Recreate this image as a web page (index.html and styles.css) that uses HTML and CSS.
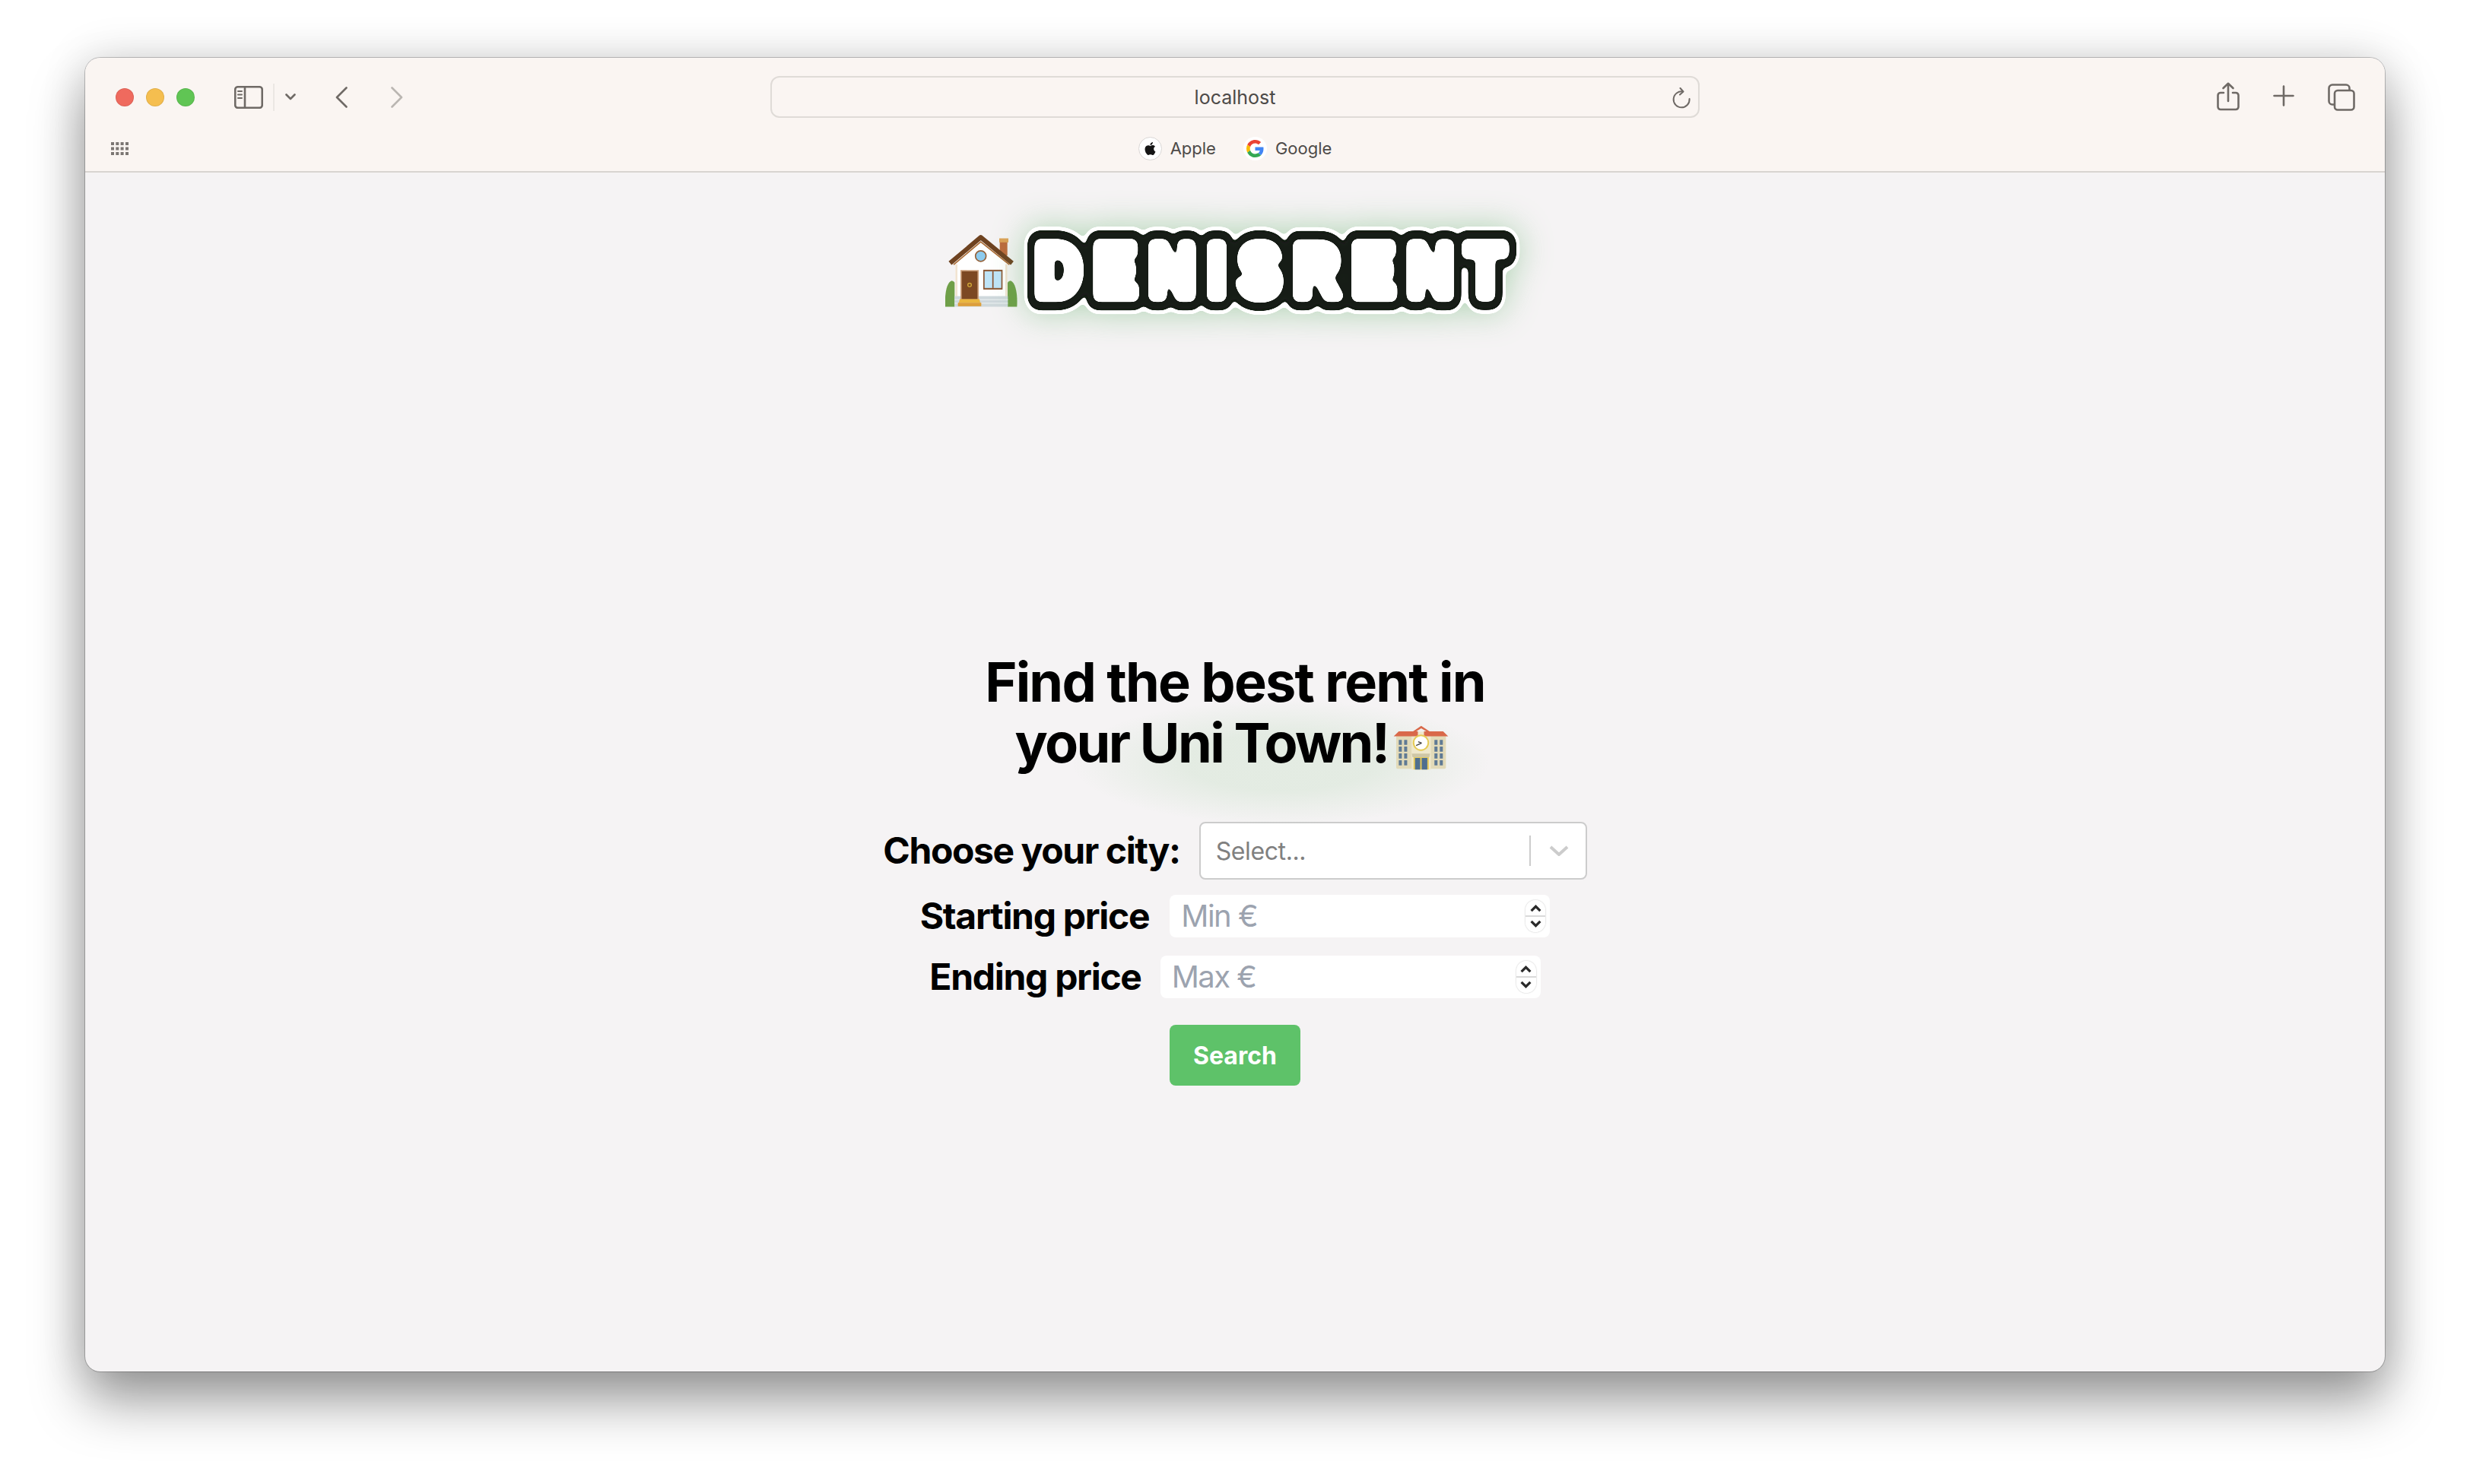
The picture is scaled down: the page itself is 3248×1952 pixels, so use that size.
FILE: index.html
```html
<!DOCTYPE html>
<html lang="en">
<head>
<meta charset="utf-8">
<title>DenisRent</title>
<link rel="stylesheet" href="styles.css">
</head>
<body>
<div class="window">
  <header class="toolbar">
    <div class="row-top">
      <div class="tools-left">
        <span class="light red"></span><span class="light yellow"></span><span class="light green"></span>
        <svg class="ic-sidebar" viewBox="0 0 38 30"><rect x="1.25" y="1.25" width="35.5" height="27.5" rx="3.5"/><path d="M14 1.5v27"/><path class="thin" d="M5 7h5M5 11.5h5M5 16h5"/></svg>
        <span class="sep"></span>
        <svg class="ic-chev" viewBox="0 0 14 9"><path d="M1.5 1.5 7 7l5.5-5.5"/></svg>
        <svg class="ic-back" viewBox="0 0 16 28"><path d="M14.5 1.5 2 14l12.5 12.5"/></svg>
        <svg class="ic-fwd" viewBox="0 0 16 28"><path d="M1.5 1.5 14 14 1.5 26.5"/></svg>
      </div>
      <div class="address">
        <span class="address-text">localhost</span>
        <svg class="ic-reload" viewBox="0 0 24 28"><path d="M14 5.5A10.5 10.5 0 1 0 22.6 15"/><path d="M10.5 1 14.5 5.5 10 9.5"/></svg>
      </div>
      <div class="tools-right">
        <svg class="ic-share" viewBox="0 0 30 38"><path d="M9 14H5a3.5 3.5 0 0 0-3.5 3.5v15A3.5 3.5 0 0 0 5 36h20a3.5 3.5 0 0 0 3.5-3.5v-15A3.5 3.5 0 0 0 25 14h-4"/><path d="M15 25V2M8.500 8 15 1.800 21.500 8"/></svg>
        <svg class="ic-plus" viewBox="0 0 28 28"><path d="M14 1.500v25M1.500 14h25"/></svg>
        <svg class="ic-tabs" viewBox="0 0 36 36"><path d="M8 27.500H6A4.500 4.500 0 0 1 1.500 23V6A4.500 4.500 0 0 1 6 1.500h18A4.500 4.500 0 0 1 28.500 6v2"/><rect x="9" y="9" width="25.500" height="25.500" rx="4"/></svg>
      </div>
    </div>
    <div class="row-bottom">
      <svg class="ic-grid" viewBox="0 0 23 17"><path d="M0 0h4v4H0zM6.300 0h4v4h-4zM12.600 0h4v4h-4zM19 0h4v4h-4zM0 6.500h4v4H0zM6.300 6.500h4v4h-4zM12.600 6.500h4v4h-4zM19 6.500h4v4h-4zM0 13h4v4H0zM6.300 13h4v4h-4zM12.600 13h4v4h-4zM19 13h4v4h-4z"/></svg>
      <nav class="favs">
        <a class="fav"><span class="fav-icon apple"><svg viewBox="0 0 24 24"><path d="M12.152 6.896c-.948 0-2.415-1.078-3.96-1.04-2.04.027-3.91 1.183-4.961 3.014-2.117 3.675-.546 9.103 1.519 12.09 1.013 1.454 2.208 3.09 3.792 3.039 1.52-.065 2.09-.987 3.935-.987 1.831 0 2.35.987 3.96.948 1.637-.026 2.676-1.48 3.676-2.948 1.156-1.688 1.636-3.325 1.662-3.415-.039-.013-3.182-1.221-3.22-4.857-.026-3.04 2.48-4.494 2.597-4.559-1.429-2.09-3.623-2.324-4.39-2.376-2-.156-3.675 1.09-4.61 1.09zM15.530 3.830c.843-1.012 1.4-2.427 1.245-3.830-1.207.052-2.662.805-3.532 1.818-.78.896-1.454 2.338-1.273 3.714 1.338.104 2.715-.688 3.559-1.701"/></svg></span>Apple</a>
        <a class="fav"><span class="fav-icon google"><svg viewBox="0 0 48 48"><path fill="#EA4335" d="M24 9.500c3.540 0 6.710 1.220 9.210 3.600l6.850-6.850C35.900 2.380 30.470 0 24 0 14.620 0 6.510 5.380 2.560 13.220l7.980 6.190C12.430 13.720 17.740 9.500 24 9.500z"/><path fill="#4285F4" d="M46.980 24.550c0-1.570-.15-3.090-.38-4.550H24v9.020h12.940c-.58 2.960-2.260 5.480-4.780 7.180l7.730 6c4.510-4.180 7.090-10.360 7.090-17.650z"/><path fill="#FBBC05" d="M10.530 28.590c-.48-1.450-.76-2.990-.76-4.590s.27-3.140.76-4.590l-7.980-6.190C.92 16.460 0 20.120 0 24c0 3.880.92 7.540 2.560 10.780l7.970-6.190z"/><path fill="#34A853" d="M24 48c6.480 0 11.930-2.130 15.890-5.810l-7.730-6c-2.150 1.450-4.920 2.300-8.160 2.300-6.260 0-11.570-4.220-13.470-9.910l-7.980 6.190C6.510 42.620 14.620 48 24 48z"/></svg></span>Google</a>
      </nav>
      <span class="spacer"></span>
    </div>
  </header>
  <main class="content">
    <div class="logo">
      <svg class="house" viewBox="25 32 285 290">
        <path d="M25 318c-3-50 5-95 25-103 8 0 12 8 12 8v95z" fill="#6f9f48"/>
        <path d="M308 318c3-50-5-95-25-103-8 0-12 8-12 8v95z" fill="#6f9f48"/>
        <path d="M240 56h30v60h-30z" fill="#bd6a3c"/><path d="M238 48h36v16h-36z" fill="#dda257"/>
        <path d="M65 150 165 62l105 88v128H65z" fill="#fff"/>
        <path d="M65 150v128h8V150zM262 150v128h8V150z" fill="#f2e4d2"/>
        <path d="M62 276h210v42H62z" fill="#cfd8dc"/><path d="M62 290h210M62 304h210" stroke="#eef2f3" stroke-width="3"/>
        <path d="M44 146 165 44l124 102" fill="none" stroke="#6e4220" stroke-width="18" stroke-linejoin="round"/>
        <path d="M58 152 165 62l113 90" fill="none" stroke="#a96a33" stroke-width="5"/>
        <circle cx="165" cy="118" r="21" fill="#8dcbee" stroke="#95623a" stroke-width="5"/>
        <path d="M85 173h72v118H85z" fill="#cda17e"/><path d="M90 178h62v110H90z" fill="#7c4823"/>
        <circle cx="121" cy="232" r="7" fill="none" stroke="#d0a838" stroke-width="4"/>
        <path d="M82 288h78l3 14H79z" fill="#eab63f"/><path d="M75 302h92v14H75z" fill="#dd9e3a"/>
        <path d="M175 172h76v78h-76z" fill="#8a5430"/><path d="M180 178h66v66h-66z" fill="#bfe4f8"/>
        <path d="M213 178v66" stroke="#8a5430" stroke-width="5"/>
      </svg>
      <svg class="wordmark" viewBox="0 0 660 120">
        <defs>
          <filter id="goo" x="-5%" y="-20%" width="110%" height="140%">
            <feGaussianBlur stdDeviation="3"/>
            <feColorMatrix values="1 0 0 0 0  0 1 0 0 0  0 0 1 0 0  0 0 0 14 -6"/>
          </filter>
        </defs>
        <use href="#logo-word" class="w-outer"/>
        <use href="#logo-word" class="w-black"/>
        <g class="w-top"><text id="logo-word" x="22" y="94.500" textLength="717" lengthAdjust="spacing" transform="scale(.86 1)">DENISRENT</text></g>
      </svg>
    </div>
    <h1 class="title">Find the best rent in<br><span class="title-second">your Uni Town!</span><svg class="school" viewBox="38 25 218 175">
        <path d="M50 66h195v124q0 5-5 5H55q-5 0-5-5z" fill="#e2dab8"/>
        <path d="M110 50h76v148h-76z" fill="#efe8cc"/>
        <path d="M40 68 60 48h75v20zM254 68l-20-20h-75v20z" fill="#d9694a"/>
        <path d="M105 56 148 27l44 29-3 4-41-24-39 24z" fill="#d9694a"/>
        <g fill="#5f7a94"><path d="M60 82h12v19H60zM81 82h12v19H81zM60 108h12v20H60zM81 108h12v20H81zM60 135h12v20H60zM81 135h12v20H81zM60 162h12v20H60zM81 162h12v20H81z"/><path d="M200 82h12v19h-12zM221 82h12v19h-12zM200 108h12v20h-12zM221 108h12v20h-12zM200 135h12v20h-12zM221 135h12v20h-12zM200 162h12v20h-12zM221 162h12v20h-12z"/></g>
        <circle cx="147" cy="93" r="29" fill="#fff" stroke="#e6cb55" stroke-width="6"/>
        <path d="M128 104l22-10M150 94l-14-5" stroke="#444" stroke-width="4" fill="none"/>
        <path d="M111 136h72l-3 14h-66z" fill="#cfc7a6"/>
        <path d="M118 150h60v48h-60z" fill="#e5c95b"/><path d="M124 153h20v45h-20zM150 153h22v45h-22z" fill="#4f6f8f"/>
      </svg></h1>
    <form class="form">
      <div class="row row-city">
        <label class="label label-city">Choose your city:</label>
        <div class="select">
          <span class="select-ph">Select...</span>
          <span class="select-sep"></span>
          <svg class="select-chev" viewBox="0 0 26 14"><path d="M2 2l11 10L24 2"/></svg>
        </div>
      </div>
      <div class="row row-start">
        <label class="label">Starting price</label>
        <div class="num"><input class="num-input" type="text" placeholder="Min €">
          <span class="stepper"><svg viewBox="0 0 14 9"><path d="M1.500 7.500 7 2l5.500 5.500"/></svg><svg viewBox="0 0 14 9"><path d="M1.500 1.500 7 7l5.500-5.500"/></svg></span></div>
      </div>
      <div class="row row-end">
        <label class="label">Ending price</label>
        <div class="num"><input class="num-input" type="text" placeholder="Max €">
          <span class="stepper"><svg viewBox="0 0 14 9"><path d="M1.500 7.500 7 2l5.500 5.500"/></svg><svg viewBox="0 0 14 9"><path d="M1.500 1.500 7 7l5.500-5.500"/></svg></span></div>
      </div>
      <button class="search" type="button">Search</button>
    </form>
  </main>
</div>
</body>
</html>
```
FILE: styles.css
```css
* { box-sizing: border-box; }
html, body { margin: 0; height: 100%; background: #fff; overflow: hidden; }
body { padding: 76px 112px 148px; font-family: Inter, "Liberation Sans", sans-serif; color: #000; }
svg { display: block; flex: none; }

.window {
  height: 1728px;
  border-radius: 20px;
  overflow: hidden;
  display: flex;
  flex-direction: column;
  background: #f5f3f4;
}
body::before {
  content: "";
  position: absolute;
  left: 112px; top: 76px; width: 3024px; height: 1728px;
  border-radius: 20px;
  box-shadow: 0 0 0 1px rgba(0,0,0,.22), 0 40px 70px rgba(0,0,0,.38), 0 0 60px rgba(0,0,0,.14);
}

.toolbar {
  position: relative;
  height: 151px;
  flex: none;
  background: #faf5f2;
  border-bottom: 2px solid #d8d4d1;
  padding-top: 24px;
}
.row-top {
  display: grid;
  grid-template-columns: 1fr 1222px 1fr;
  height: 55px;
  align-items: center;
}
.tools-left { display: flex; align-items: center; padding-left: 40px; }
.light { width: 24px; height: 24px; border-radius: 50%; margin-right: 16px; border: 1px solid rgba(0,0,0,.08); }
.red { background: #ef6a5e; }
.yellow { background: #f5be4f; }
.green { background: #60c554; }
.tools-left svg, .tools-right svg, .ic-reload { fill: none; stroke: #6f6a66; stroke-width: 2.6; stroke-linecap: round; stroke-linejoin: round; }
.ic-sidebar { width: 38px; height: 30px; margin-left: 36px; }
.ic-sidebar .thin { stroke-width: 2; }
.sep { width: 2px; height: 36px; background: #ebe7e3; margin-left: 13px; }
.ic-chev { width: 14px; height: 9px; margin-left: 14px; }
.ic-back { width: 16px; height: 28px; margin-left: 52px; }
.ic-fwd { width: 16px; height: 28px; margin-left: 57px; stroke: #bab6b2 !important; }

.address {
  position: relative;
  height: 55px;
  border: 2px solid #dfdbd7;
  border-radius: 12px;
  display: flex;
  align-items: center;
  justify-content: center;
}
.address-text { font-size: 25px; color: #4d4a48; }
.ic-reload { position: absolute; right: 10px; top: 13px; width: 24px; height: 28px; stroke-width: 2; }

.tools-right { display: flex; align-items: center; justify-content: flex-end; padding-right: 39px; }
.ic-share { width: 30px; height: 38px; margin-top: -1px; }
.ic-plus { width: 28px; height: 28px; margin-left: 44px; margin-top: -4px; }
.ic-tabs { width: 36px; height: 36px; margin-left: 44px; }

.row-bottom {
  display: grid;
  grid-template-columns: 1fr auto 1fr;
  align-items: center;
  height: 32px;
  margin-top: 24px;
}
.ic-grid { width: 23px; height: 17px; margin-left: 34px; fill: #7b7673; }
.favs { display: flex; gap: 36px; }
.fav { display: flex; align-items: center; gap: 11px; font-size: 22px; color: #4d4a48; }
.fav-icon { width: 31px; height: 31px; border-radius: 50%; background: #fff; display: flex; align-items: center; justify-content: center; }
.fav-icon.apple { border: 1px solid #d9d6d4; }
.apple svg { width: 17px; height: 19px; fill: #151515; }
.google svg { width: 23px; height: 23px; }

.content {
  flex: 1;
  display: flex;
  flex-direction: column;
  align-items: center;
  padding-top: 68px;
}
.logo { display: flex; align-items: center; height: 120px; margin-left: -2px; }
.house { width: 95px; height: 97px; margin-right: 5px; margin-top: 2px; }
.wordmark { width: 660px; height: 120px; overflow: visible; filter: drop-shadow(0 0 22px rgba(80,170,90,.42)); }
.wordmark text { font-family: "Liberation Sans", sans-serif; font-weight: 700; font-size: 96px; }
.w-outer { fill: #fff; stroke: #fff; stroke-width: 48px; stroke-linejoin: round; filter: url(#goo); }
.w-black { fill: #181b17; stroke: #181b17; stroke-width: 38px; stroke-linejoin: round; filter: url(#goo); }
.w-top { fill: #fff; stroke: #fff; stroke-width: 16px; stroke-linejoin: round; filter: url(#goo); }

.title {
  position: relative;
  z-index: 0;
  margin: 442px 0 0;
  font-size: 72px;
  line-height: 80px;
  font-weight: 700;
  text-align: center;
  letter-spacing: -1.8px;
}
.title-second { letter-spacing: -2.6px; }
.title::before {
  content: "";
  position: absolute;
  z-index: -1;
  left: 114px;
  top: 63px;
  width: 550px;
  height: 165px;
  background: radial-gradient(closest-side, rgba(110,185,110,.13) 45%, rgba(110,185,110,0));
}
.school { display: inline-block; width: 73px; height: 59px; margin: 0 9px 0 6px; vertical-align: -10px; }

.form { display: flex; flex-direction: column; align-items: center; gap: 20px; margin-top: 64px; }
.row { display: flex; align-items: center; gap: 27px; }
.row-city { gap: 25px; }
.row-end { margin-top: 4px; gap: 25px; }
.label { font-size: 48px; font-weight: 700; line-height: 56px; letter-spacing: -1.3px; }
.label-city { letter-spacing: -1.4px; }
.select {
  width: 510px;
  height: 76px;
  background: #fff;
  border: 2px solid #ccc;
  border-radius: 8px;
  display: flex;
  align-items: center;
  padding: 0 22px 0 20px;
}
.select-ph { flex: 1; font-size: 32px; color: #808080; letter-spacing: -.4px; }
.select-sep { width: 2px; height: 40px; background: #ccc; margin-right: 24px; }
.select-chev { width: 26px; height: 14px; fill: none; stroke: #ccc; stroke-width: 4; }

.num { position: relative; width: 500px; height: 56px; background: #fff; border-radius: 8px; }
.num-input {
  width: 100%;
  height: 56px;
  border: 0;
  outline: 0;
  background: transparent;
  padding: 0 15px;
  font: 400 40px/56px Inter, "Liberation Sans", sans-serif;
  letter-spacing: -1.5px;
  color: #111;
}
.num-input::placeholder { color: #9ca3af; opacity: 1; }
.stepper {
  position: absolute;
  right: 6px;
  top: 7px;
  width: 26px;
  height: 42px;
  border-radius: 13px;
  background: linear-gradient(#fff 47%, #d9d9d9 47%, #d9d9d9 53%, #fff 53%);
  box-shadow: 0 0 2px rgba(0,0,0,.3);
  display: flex;
  flex-direction: column;
  align-items: center;
  justify-content: space-between;
  padding: 6px 0;
}
.stepper svg { width: 15px; height: 10px; fill: none; stroke: #2a2a2a; stroke-width: 3; }

.search {
  margin-top: 15px;
  width: 172px;
  height: 80px;
  border: 0;
  border-radius: 8px;
  background: #5ec269;
  color: #fff;
  font: 700 32px Inter, "Liberation Sans", sans-serif;
}
```
